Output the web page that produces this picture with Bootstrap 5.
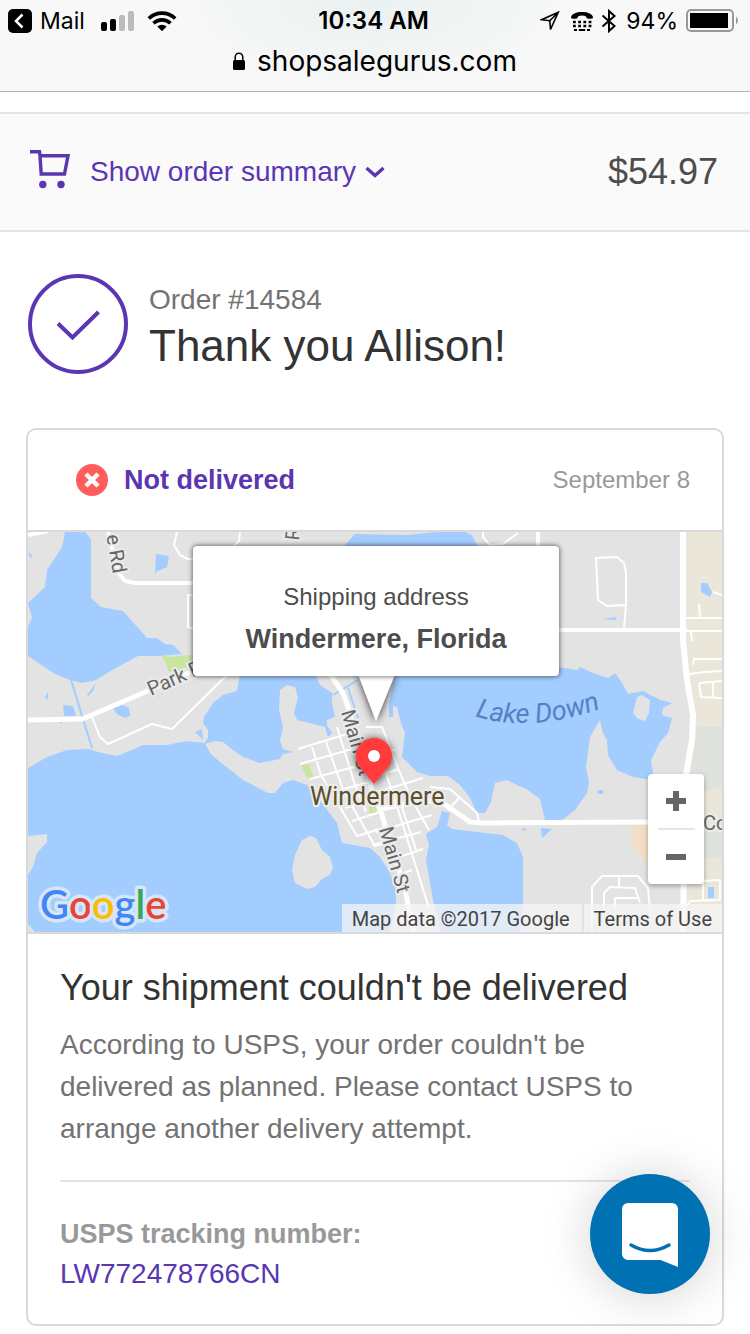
<!DOCTYPE html>
<html lang="en">
<head>
<meta charset="utf-8">
<meta name="viewport" content="width=device-width, initial-scale=1">
<title>Thank you Allison! - Order #14584</title>
<link href="https://cdn.jsdelivr.net/npm/bootstrap@5.3.0/dist/css/bootstrap.min.css" rel="stylesheet">
<style>
  :root { --brand: #5a36b3; --line: #d9d9d9; --ui: "Inter", sans-serif; --map: "Roboto", sans-serif; }
  body { font-family: "Liberation Sans", Arial, sans-serif; font-size: 28px; line-height: 42px; color: #333; background: #fff; }
  a { color: var(--brand); text-decoration: none; }
  svg { display: block; flex: none; }

  .browser-top { height: 92px; font-family: var(--ui); color: #000; border-bottom: 1px solid #b2b2b2;
    background: radial-gradient(ellipse 200px 90px at 50% 0, #e9f1f0, #f8f8f8); }
  .status-row { height: 40px; font-size: 23px; line-height: 42px; padding: 0 11px 0 8px; }
  .clock { font-size: 24px; }
  .address-row { font-size: 28px; line-height: 42px; }

  .summary-bar { margin-top: 20px; padding: 0 32px 0 30px; height: 120px; background: #fafafa; border: solid #e4e4e4; border-width: 2px 0; }
  .summary-toggle { color: var(--brand); font-size: 28px; line-height: 44px; }
  .total-price { font-size: 36px; color: #4d4d4d; }

  .thanks { padding: 42px 28px 54px; gap: 21px; }
  .order-no { color: #737373; line-height: 36px; padding-top: 8px; }
  .thanks h1 { font-size: 44px; line-height: 56px; font-weight: 400; }

  .order-card { margin: 0 26px 8px; border: 2px solid var(--line); border-radius: 10px; overflow: hidden; }
  .card-top { height: 102px; padding: 0 32px 0 48px; border-bottom: 2px solid var(--line); }
  .strong-text { font-size: 27px; font-weight: 700; }
  .date-text { font-size: 24px; color: #999; }

  .map-box { height: 402px; border-bottom: 2px solid var(--line); overflow: hidden; }
  .map-box > svg { width: 100%; height: 100%; }
  .bubble-layer { inset: 0; padding: 14px 0 0 2px; }
  .bubble { width: 366px; height: 130px; padding-top: 30px; background: #fff; border-radius: 4px; color: #4d4d4d; box-shadow: 0 0 4px 1px rgba(0,0,0,.5); }
  .bubble-label { font-size: 24px; }
  .map-credit { right: 0; bottom: 0; height: 28px; gap: 2px; font: 20px/30px var(--map); }
  .map-credit > * { background: rgba(245,245,245,.75); color: #444; padding: 0 10px; white-space: nowrap; }
  .map-credit > span { padding-right: 12px; }
  .zoom-box { right: 18px; bottom: 48px; width: 56px; height: 110px; background: #fff; border-radius: 4px; box-shadow: 0 2px 5px rgba(0,0,0,.3); }
  .zoom-box button { width: 56px; height: 54px; padding: 0; border: 0; background: none; }
  .zoom-box hr { width: 37px; height: 2px; background: #e6e6e6; border: 0; opacity: 1; margin: 0; }

  .card-text { padding: 30px 32px; color: #737373; }
  .card-text h2 { font-size: 36px; line-height: 48px; font-weight: 400; color: #333; margin-bottom: 12px; }
  .card-text hr { margin: 30px 0 32px; border-top: 2px solid #e4e4e4; opacity: 1; }
  .track-label { color: #999; line-height: 40px; }
  .track-no { line-height: 40px; }

  .chat-btn { right: 40px; bottom: 40px; width: 120px; height: 120px; border: 0; border-radius: 50%; background: #0071b2; box-shadow: 0 2px 50px rgba(0,0,0,.18); }
</style>
</head>
<body>

<header class="browser-top">
  <div class="status-row row g-0">
    <div class="col d-flex align-items-center">
      <svg width="24" height="24" viewBox="0 0 24 24"><rect width="24" height="24" rx="5"/><path d="M14.500 5.500 8 12l6.500 6.500" fill="none" stroke="#fff" stroke-width="2.500"/></svg>
      <span class="ms-2 me-3">Mail</span>
      <svg width="34" height="22" viewBox="0 0 34 22"><rect y="12" width="6" height="9" rx="2"/><rect x="9" y="9" width="6" height="12" rx="2"/><g fill="#bbb"><rect x="18" y="5" width="6" height="16" rx="2"/><rect x="27" y="1" width="6" height="20" rx="2"/></g></svg>
      <svg class="ms-2 ps-1" width="34" height="20" viewBox="0 0 30 20"><g fill="none" stroke="#000" stroke-width="3.600"><path d="M1.800 7.500a19 19 0 0 1 26.400 0M6.500 12.300a12.300 12.300 0 0 1 17 0"/></g><path d="M10.300 15.500a7 7 0 0 1 9.400 0L15 20.200z"/></svg>
    </div>
    <div class="clock col-auto fw-semibold">10:34 AM</div>
    <div class="col d-flex align-items-center justify-content-end">
      <svg width="20" height="20" viewBox="0 0 20 20"><path d="M18.300 1.200 10.500 18.500 9.800 9.700 1.500 8.700zM9.800 9.700 18.300 1.200" fill="none" stroke="#000" stroke-width="1.600"/></svg>
      <svg class="ms-2 me-1" width="28" height="20" viewBox="0 0 28 20"><path d="M3 6.800C3-.8 25-.8 25 6.800c0 1.300-6.500 1.300-6.500 0 0-3-9-3-9 0C9.500 8.100 3 8.100 3 6.800z"/><path d="M5 11h18.500" stroke="#000" stroke-width="2.600" stroke-dasharray="2.800 2.400"/><path d="M5 15h18.500" stroke="#000" stroke-width="2.600" stroke-dasharray="2.800 2.400"/><path d="M6 19h3m1.800 0h6.400m1.800 0h3" stroke="#000" stroke-width="2.200"/></svg>
      <svg width="18" height="24" viewBox="0 0 18 24"><path d="M2.500 6.500 14.500 17 9 22V2l5.500 5L2.500 17.500" fill="none" stroke="#000" stroke-width="2"/></svg>
      <span class="mx-2">94%</span>
      <svg width="53" height="24" viewBox="0 0 53 24"><rect x="1" y="1" width="46" height="21" rx="4" fill="none" stroke="#999" stroke-width="2"/><rect x="4" y="4" width="38" height="15"/><path d="M50 7.500q4 4 0 8z" fill="#999"/></svg>
    </div>
  </div>
  <div class="address-row d-flex justify-content-center align-items-center">
    <svg class="me-2" width="16" height="18" viewBox="0 0 16 18"><rect y="8" width="12" height="10" rx="1.500"/><path d="M2.200 9V5a3.800 3.800 0 0 1 7.600 0v4" fill="none" stroke="#000" stroke-width="1.500"/></svg>
    <span>shopsalegurus.com</span>
  </div>
</header>

<main>
  <section class="summary-bar d-flex justify-content-between align-items-center">
    <button type="button" class="summary-toggle btn btn-link p-0 border-0 d-flex align-items-center text-decoration-none">
      <svg width="40" height="44" viewBox="0 0 40 44"><path d="M0 1.800h9.500L10 5.700m0 0h28L34.500 24H11.200z" fill="none" stroke="#5a36b3" stroke-width="3.400"/><circle cx="12.800" cy="34.500" r="3.700" fill="#5a36b3"/><circle cx="31" cy="34.500" r="3.700" fill="#5a36b3"/></svg>
      <span class="ms-3 ps-1">Show order summary</span>
      <svg class="ms-2" width="22" height="12" viewBox="0 0 22 12"><path d="M2.500 2 11 9.500 19.500 2" fill="none" stroke="#5a36b3" stroke-width="3.400"/></svg>
    </button>
    <span class="total-price">$54.97</span>
  </section>

  <section class="thanks d-flex align-items-center">
    <svg width="100" height="100" viewBox="0 0 100 100" fill="none" stroke="#5a36b3" stroke-width="4"><circle cx="50" cy="50" r="48"/><path d="M30 49.500 44.500 63.500 70.500 38"/></svg>
    <div>
      <div class="order-no">Order #14584</div>
      <h1 class="mb-0">Thank you Allison!</h1>
    </div>
  </section>

  <article class="order-card">
    <div class="card-top d-flex justify-content-between align-items-center">
      <a href="#" class="strong-text d-flex align-items-center gap-3">
        <svg width="32" height="32" viewBox="0 0 32 32"><circle cx="16" cy="16" r="16" fill="#ff5d5d"/><path d="m10 10 12 12m0-12L10 22" stroke="#fff" stroke-width="4.500"/></svg>
        Not delivered
      </a>
      <time class="date-text" datetime="2017-09-08">September 8</time>
    </div>

    <div class="map-box position-relative">
      <svg viewBox="28 532 694 400" preserveAspectRatio="xMidYMid slice" font-family="Roboto, sans-serif">
        <defs><filter id="soft" x="-50%" y="-50%" width="200%" height="200%"><feDropShadow dx="0" dy="1" stdDeviation="4" flood-opacity=".8"/></filter></defs>
        <rect x="28" y="532" width="694" height="400" fill="#e3e3e3"/>
        <!-- land use -->
        <path fill="#ebe6da" d="M686 532H722V932H683L690 740 694 715 686 640z"/>
        <path fill="#dfe1dd" d="M697 727H722V786L704 792 690 780zM704 832H722V858H704z"/>
        <path fill="#f3dec5" d="M632 825H650V868L640 855 633 845z"/>
        <path fill="#c9e69f" d="M160 652 168 657 192 655 196 665 183 668 173 672 168 671 166 663z"/>
        <!-- lakes -->
        <g fill="#a3ccff">
          <path d="M65 532H85L91 539V598L101 607 123 611 147 638 157 638 165 644 173 645 182 654 157 656H138L112 670 96 680 82 683 70 680 55 674 28 656V627L32 618 28 603 45 587 47 570 62 547z"/>
          <path d="M28 552 32 555 31 559zM156 554 169 556 167 567 156 572 155 575zM87 695 96 683 93 691 88 696zM45 697 48 692V700zM63 705 73 706 76 716 64 716zM112 707 120 704 129 708 130 716 125 718 117 714zM195 732 202 729 203 740zM60 717H68L60 724z"/>
          <path d="M28 768 47 757 67 750 88 749 102 753 117 756 127 752 143 745H167L187 741 205 743 210 753 220 762 233 772 243 780 268 793 275 793 283 783 293 780 307 785 320 800 337 823 342 843 353 845 370 848 380 857 390 873 396 890V905L390 932H28z"/>
          <path d="M240 674 237 691 223 695 213 703 204 717 203 723 208 730V738L204 744 215 741 223 742 233 750 243 757 260 763 280 759 283 754 293 752 283 749 280 740 283 727 279 710 280 690 287 685 295 687 298 697 294 713 297 720 310 723 325 727 328 737 332 733 327 725V720L335 717 332 703V693L320 685 315 674z"/>
          <path d="M395 670 389 705V717H393V706L397 707 401 723 405 733 402 757 417 772 430 776H448L460 785 470 798 477 813H485L491 802 495 783 507 780 517 785 528 790 540 799 545 820H562L575 810 587 793 589 783 586 767 590 737 600 720 603 733 607 740 608 755 617 770 633 777 647 779 653 773 651 760 660 742 668 733 672 718 662 715 663 708 672 703 660 700 643 691 628 694 622 683 615 673 608 678 593 673 580 667 577 670 558 667 500 640z"/>
          <path d="M442 811 450 813 447 825 452 829 503 835 517 843 523 857V903L520 932H440L438 917 433 900 426 860 429 845 426 834 437 827z"/>
          <path d="M343 547 355 534 407 535 437 532H465L472 535 478 547z"/>
          <path d="M603 619 615 617 617 620zM701 583H707L712 592 710 597 701 592zM598 790H603V794H598zM541 828 552 829 542 838zM521 828 527 829 524 831zM708 887H714V898H708z"/>
        </g>
        <path d="M71 680 92 748M333 695 358 680M348 688 358 718" fill="none" stroke="#a3ccff" stroke-width="2"/>
        <path fill="#e3e3e3" d="M302 840 310 836 316 838 322 850 330 857 333 867 330 875 322 879 315 887 307 889 295 883 292 870 295 855zM28 836 47 834V842L37 853 33 867 28 875zM637 697 642 695 650 700 649 713 645 721 638 719 633 713zM28 924 35 932H28z"/>
        <path fill="#c9e69f" d="M301 765 309 764 314 778H307zM369 806H377L376 813H369z"/>
        <!-- streets -->
        <g fill="none" stroke="#fff" stroke-linejoin="round">
          <path stroke-width="6" d="M683 532V640L687 680 693 715 692 740 685 780 683 932"/>
          <path stroke-width="5" d="M28 720 82 719 92 715 143 693 200 668M330 674 343 693 348 707 358 740 372 790 381 812 393 850 405 890 414 932M381 809 420 801H440L470 822 483 823 650 822"/>
          <path stroke-width="4" d="M108 532 118 572 125 581 135 583H195M538 532V547M555 630H687M28 535 48 531"/>
          <path stroke-width="2" d="M92 717 100 737 108 744 152 724 172 729 227 675M177 532 174 545 180 555 188 559H195M240 532 239 541 233 547M195 595H188V627L195 629M483 532V537L490 545 503 544 518 533M596 558 617 557 624 563 626 573V605L607 606 598 600zM626 605 624 629M686 618H722M686 631H722M700 617 699 604M713 592 722 595M692 641 691 632M693 665 694 659H722M683 675 704 672 722 671M699 683 722 681M699 683 701 697 722 698M713 682V697"/>
          <path stroke-width="2" d="M298 749 347 734M300 764 355 748M310 779 361 765M333 792 370 782M345 808 380 798M352 821 380 812M357 836 386 827M312 747 321 775 357 836M326 742 344 792 375 846 388 842M337 727 355 785 366 812M366 727H382L400 773 413 802 429 830M367 755 395 750M370 778 399 769M374 793 423 778M383 765 395 800 429 908M376 832 432 815M372 845 421 832M396 858 423 849M404 873 412 870M402 807 416 850M430 787 450 789 477 813 479 822M460 797 448 810"/>
          <path stroke-width="2" d="M592 932V887L602 876H638L648 888 650 910M604 908V893L610 887 635 888 640 903M615 907V898H638M619 877V887M687 882 720 880V900L690 901 685 908M703 881V900"/>
        </g>
        <!-- labels -->
        <g font-size="20" fill="#666" stroke="#ebebeb" stroke-width="4" stroke-linejoin="round" paint-order="stroke">
          <text transform="translate(151 696) rotate(-24)">Park R</text>
          <text transform="translate(113 574) rotate(80)" text-anchor="end">e Rd</text>
          <text transform="translate(299 541) rotate(-84)">R</text>
          <text transform="translate(341 712) rotate(74)">Main St</text>
          <text transform="translate(379 829) rotate(74)">Main St</text>
          <text x="703" y="830">Co</text>
          <text x="310" y="805" font-size="25" fill="#5c4f2b">Windermere</text>
        </g>
        <path id="lakeCurve" d="M475 716Q535 736 618 702" fill="none"/>
        <text font-size="27" font-style="italic" fill="#5182c4"><textPath href="#lakeCurve">Lake Down</textPath></text>
        <text x="40" y="919" font-family="Lato, sans-serif" font-size="40" font-weight="600" stroke="#d6e6f8" stroke-width="7" stroke-linejoin="round" paint-order="stroke"><tspan fill="#4285f4">G</tspan><tspan fill="#ea4335">o</tspan><tspan fill="#fbbc05">o</tspan><tspan fill="#4285f4">g</tspan><tspan fill="#34a853">l</tspan><tspan fill="#ea4335">e</tspan></text>
        <path d="M358 674 376 721 395 674z" fill="#fff" filter="url(#soft)"/>
        <path d="M374 784 360.500 768A18 18 0 1 1 387.500 768z" fill="#ff3b3b" filter="url(#soft)"/>
        <circle cx="374" cy="756" r="6" fill="#fff"/>
      </svg>
      <div class="bubble-layer position-absolute d-flex flex-column align-items-center">
        <div class="bubble text-center">
          <div class="bubble-label">Shipping address</div>
          <div class="strong-text">Windermere, Florida</div>
        </div>
      </div>
      <div class="map-credit position-absolute d-flex">
        <span>Map data ©2017 Google</span><a href="#">Terms of Use</a>
      </div>
      <div class="zoom-box position-absolute d-flex flex-column align-items-center">
        <button type="button" aria-label="Zoom in"><svg class="mx-auto" width="22" height="22" viewBox="0 0 22 22"><path d="M11 1v20M1 11h20" stroke="#666" stroke-width="6"/></svg></button>
        <hr>
        <button type="button" aria-label="Zoom out"><svg class="mx-auto" width="22" height="22" viewBox="0 0 22 22"><path d="M1 11h20" stroke="#666" stroke-width="6"/></svg></button>
      </div>
    </div>

    <div class="card-text">
      <h2>Your shipment couldn't be delivered</h2>
      <p class="mb-0">According to USPS, your order couldn't be delivered as planned. Please contact USPS to arrange another delivery attempt.</p>
      <hr>
      <div class="track-label strong-text">USPS tracking number:</div>
      <a href="#" class="track-no d-block">LW772478766CN</a>
    </div>
  </article>
</main>

<button type="button" class="chat-btn position-fixed p-0" aria-label="Open chat">
  <svg class="mx-auto" width="58" height="66" viewBox="0 0 58 66"><path d="M7 2h44a6 6 0 0 1 6 6v58L39.500 59H7a6 6 0 0 1-6-6V8a6 6 0 0 1 6-6z" fill="#fff"/><path d="M10 44q19 11 38 0" fill="none" stroke="#0071b2" stroke-width="3.500" stroke-linecap="round"/></svg>
</button>

<script src="https://cdn.jsdelivr.net/npm/bootstrap@5.3.0/dist/js/bootstrap.bundle.min.js"></script>
</body>
</html>
